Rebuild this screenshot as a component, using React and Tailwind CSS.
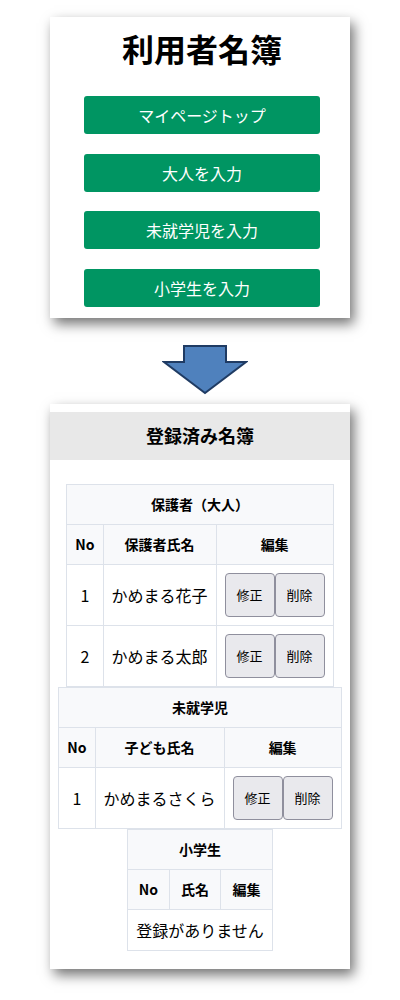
import React from 'react';

const font = { fontFamily: '"Noto Sans CJK JP", "Noto Sans", sans-serif' };

const menu = ['マイページトップ', '大人を入力', '未就学児を入力', '小学生を入力'];

const th = 'border border-[#dde2ea] bg-[#f8f9fb] px-2 py-[9px] text-[14px] font-bold leading-[21px]';
const td = 'border border-[#dde2ea] px-2 py-2 text-[16px] leading-[24px]';

const EditButtons = () => (
  <div className="flex">
    <button className="h-[44px] w-[50px] rounded-[4px] border border-[#8f8f9d] bg-[#e9e9ed] text-[13px] text-black">修正</button>
    <button className="h-[44px] w-[50px] rounded-[4px] border border-[#8f8f9d] bg-[#e9e9ed] text-[13px] text-black">削除</button>
  </div>
);

const RosterTable = ({ title, nameLabel, rows }) => (
  <table className="mx-auto border-collapse text-center text-black">
    <thead>
      <tr>
        <th colSpan={3} className={th}>{title}</th>
      </tr>
      <tr>
        <th className={th}>No</th>
        <th className={th}>{nameLabel}</th>
        <th className={th}>編集</th>
      </tr>
    </thead>
    <tbody>
      {rows.length === 0 ? (
        <tr>
          <td colSpan={3} className={td}>登録がありません</td>
        </tr>
      ) : (
        rows.map((name, i) => (
          <tr key={name}>
            <td className={td}>{i + 1}</td>
            <td className={td}>{name}</td>
            <td className={td}>
              <EditButtons />
            </td>
          </tr>
        ))
      )}
    </tbody>
  </table>
);

const DownArrow = () => (
  <svg width="86" height="50" viewBox="0 0 86 50">
    <path d="M22 1 H64 V17 H84 L43 48 L2 17 H22 Z" fill="#4f81bd" stroke="#1f3b63" strokeWidth="2" strokeLinejoin="miter" />
  </svg>
);

export default function App() {
  return (
    <div className="min-h-[1000px] bg-white pt-[17px]" style={font}>
      {/* Menu card */}
      <div className="mx-auto w-[300px] bg-white pb-[11px] pt-3 shadow-[4px_6px_12px_rgba(0,0,0,0.55)]">
        <h1 className="pl-1 text-center text-[32px] font-bold leading-[38px] text-black">利用者名簿</h1>
        <div className="mt-[29px] flex flex-col items-center gap-[19.5px] pl-1">
          {menu.map((label) => (
            <button
              key={label}
              className="h-[38px] w-[236px] rounded-[3px] bg-[#009562] text-[16px] text-white"
            >
              {label}
            </button>
          ))}
        </div>
      </div>

      {/* Arrow */}
      <div className="mt-[27px] flex justify-center pl-[10px]">
        <DownArrow />
      </div>

      {/* Registered card */}
      <div className="mx-auto mt-[9px] w-[300px] bg-white pb-[18px] pt-2 shadow-[4px_6px_12px_rgba(0,0,0,0.55)]">
        <div className="flex h-[48px] items-center justify-center bg-[#e8e8e8] text-[18px] font-bold text-black">
          登録済み名簿
        </div>
        <div className="mt-6">
          <RosterTable title="保護者（大人）" nameLabel="保護者氏名" rows={['かめまる花子', 'かめまる太郎']} />
          <RosterTable title="未就学児" nameLabel="子ども氏名" rows={['かめまるさくら']} />
          <RosterTable title="小学生" nameLabel="氏名" rows={[]} />
        </div>
      </div>
    </div>
  );
}
